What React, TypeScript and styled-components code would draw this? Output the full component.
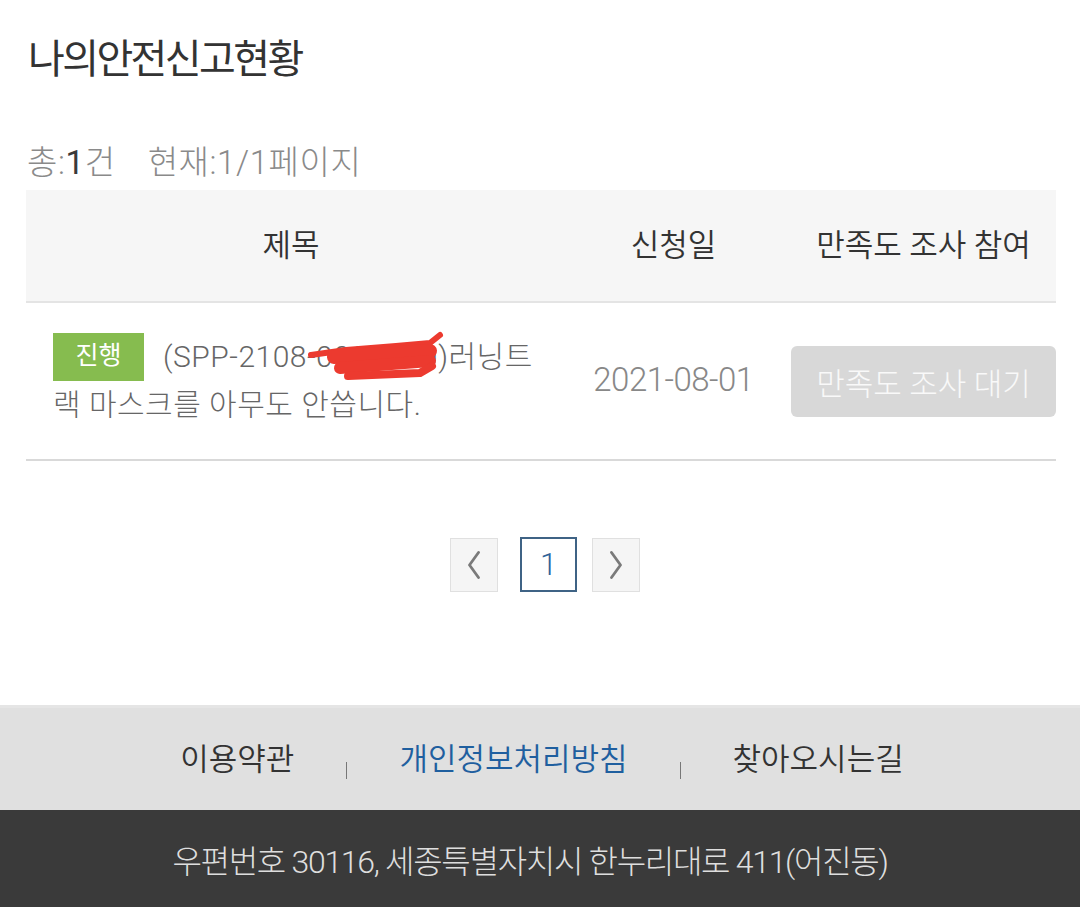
import React from "react";
import styled, { createGlobalStyle } from "styled-components";

const GlobalStyle = createGlobalStyle`
  html, body {
    margin: 0;
    padding: 0;
    background: #ffffff;
  }
  body {
    font-family: Roboto, "Noto Sans CJK KR", "Noto Sans", sans-serif;
    font-weight: 300;
    color: #333;
  }
  * { box-sizing: border-box; }
`;

const Page = styled.div`
  width: 1080px;
  display: flex;
  flex-direction: column;
`;

const Content = styled.main`
  padding: 0 24px 0 26px;
  display: flex;
  flex-direction: column;
`;

const Title = styled.h1`
  margin: 0;
  padding: 30px 0 0 2px;
  height: 90px;
  line-height: 60px;
  font-size: 40px;
  font-weight: 400;
  letter-spacing: -2.6px;
  color: #333;
`;

const Summary = styled.div`
  margin-top: 53px;
  margin-bottom: 7px;
  padding-left: 1px;
  height: 40px;
  line-height: 40px;
  font-size: 33px;
  letter-spacing: 0.6px;
  color: #8a8a8a;
  display: flex;
  gap: 32px;
`;

const Strong = styled.b`
  font-weight: 400;
  color: #3a3a3a;
`;

const Table = styled.table`
  width: 1030px;
  border-collapse: collapse;
  table-layout: fixed;
`;

const HeadRow = styled.tr`
  background: #f6f6f6;
  border-bottom: 2px solid #e4e4e4;
`;

const Th = styled.th<{ $w: number }>`
  width: ${(p) => p.$w}px;
  height: 112px;
  padding: 0 0 6px;
  font-size: 31px;
  font-weight: 350;
  letter-spacing: 0;
  color: #333;
  text-align: center;
  vertical-align: middle;
`;

const BodyRow = styled.tr`
  border-bottom: 2px solid #d9d9d9;
`;

const TitleCell = styled.td`
  height: 158px;
  padding: 0 18px 0 27px;
  vertical-align: middle;
  font-size: 30px;
  line-height: 48px;
  letter-spacing: 0.5px;
  color: #666;
  word-break: break-all;
`;

const Badge = styled.span`
  display: inline-block;
  width: 91px;
  height: 48px;
  margin-right: 19px;
  background: #86bc4f;
  color: #ffffff;
  font-size: 25px;
  font-weight: 400;
  letter-spacing: 0;
  line-height: 46px;
  text-align: center;
  vertical-align: top;
`;

const Redacted = styled.span`
  position: relative;
  letter-spacing: 0.8px;
`;

const Scribble = styled.svg`
  position: absolute;
  left: -10px;
  top: -8px;
  width: 145px;
  height: 50px;
  overflow: visible;
`;

const DateCell = styled.td`
  padding: 0 0 3px;
  text-align: center;
  vertical-align: middle;
  font-size: 33px;
  letter-spacing: -0.5px;
  color: #888;
`;

const ActionCell = styled.td`
  padding: 0;
  vertical-align: middle;
`;

const WaitButton = styled.button`
  width: 265px;
  height: 71px;
  border: none;
  border-radius: 6px;
  background: #d8d8d8;
  color: #f9f9f9;
  font-family: inherit;
  font-size: 31px;
  font-weight: 300;
  letter-spacing: 0;
  padding: 0;
  display: block;
`;

const Pager = styled.nav`
  margin-top: 76px;
  display: flex;
  justify-content: center;
  align-items: center;
  padding-left: 8px;
`;

const ArrowBox = styled.span<{ $side: "l" | "r" }>`
  width: 48px;
  height: 54px;
  border: 1px solid #e0e0e0;
  background: #f5f5f5;
  display: flex;
  align-items: center;
  justify-content: center;
  margin: ${(p) => (p.$side === "l" ? "0 22px 0 0" : "0 0 0 15px")};
`;

const CurrentPage = styled.span`
  width: 57px;
  height: 55px;
  border: 2px solid #3f6385;
  background: #fff;
  color: #2f6399;
  font-size: 31px;
  font-weight: 300;
  display: flex;
  align-items: center;
  justify-content: center;
`;

const LinksBar = styled.footer`
  margin-top: 113px;
  height: 105px;
  background: #e0e0e0;
  border-top: 3px solid #e5e5e5;
  display: flex;
  justify-content: center;
  align-items: center;
  gap: 52px;
  padding: 0 0 6px 4px;
`;

const FooterLink = styled.a<{ $active?: boolean }>`
  font-size: 31px;
  font-weight: 350;
  letter-spacing: 0;
  color: ${(p) => (p.$active ? "#1f5f9f" : "#333")};
  text-decoration: none;
`;

const Sep = styled.span`
  width: 1px;
  height: 17px;
  background: #777;
  margin-top: 28px;
`;

const AddressBar = styled.div`
  height: 97px;
  background: #3a3a3a;
  color: #dedede;
  display: flex;
  align-items: center;
  justify-content: center;
  font-size: 32px;
  font-weight: 300;
  letter-spacing: -1.3px;
  padding-right: 20px;
`;

const Chevron = ({ dir }: { dir: "l" | "r" }) => (
  <svg width="14" height="28" viewBox="0 0 14 28" fill="none">
    <path
      d={dir === "l" ? "M11.5 1.5 L2.5 14 L11.5 26.5" : "M2.5 1.5 L11.5 14 L2.5 26.5"}
      stroke="#7a7a7a"
      strokeWidth="2.8"
      strokeLinecap="round"
      strokeLinejoin="round"
    />
  </svg>
);

export default function App() {
  return (
    <Page>
      <GlobalStyle />
      <Content>
        <Title>나의안전신고현황</Title>
        <Summary>
          <span>
            총:<Strong>1</Strong>건
          </span>
          <span>현재:1/1페이지</span>
        </Summary>
        <Table>
          <thead>
            <HeadRow>
              <Th $w={530}>제목</Th>
              <Th $w={235}>신청일</Th>
              <Th $w={265}>만족도 조사 참여</Th>
            </HeadRow>
          </thead>
          <tbody>
            <BodyRow>
              <TitleCell>
                <Badge>진행</Badge>
                (SPP-2108-
                <Redacted>
                  0000000
                  <Scribble viewBox="0 0 145 50">
                    <g
                      stroke="#ec3a2f"
                      strokeLinecap="round"
                      strokeLinejoin="round"
                      fill="none"
                    >
                      <path d="M5 24 L40 19 L90 15 L124 12 L134 4" strokeWidth="6" />
                      <path d="M28 26 L124 20" strokeWidth="14" />
                      <path d="M34 37 L124 30" strokeWidth="12" />
                      <path d="M42 45 L114 42 L126 35" strokeWidth="8" />
                    </g>
                  </Scribble>
                </Redacted>
                )러닝트랙 마스크를 아무도 안씁니다.
              </TitleCell>
              <DateCell>2021-08-01</DateCell>
              <ActionCell>
                <WaitButton type="button">만족도 조사 대기</WaitButton>
              </ActionCell>
            </BodyRow>
          </tbody>
        </Table>
        <Pager>
          <ArrowBox $side="l">
            <Chevron dir="l" />
          </ArrowBox>
          <CurrentPage>1</CurrentPage>
          <ArrowBox $side="r">
            <Chevron dir="r" />
          </ArrowBox>
        </Pager>
      </Content>
      <LinksBar>
        <FooterLink href="#">이용약관</FooterLink>
        <Sep />
        <FooterLink href="#" $active>
          개인정보처리방침
        </FooterLink>
        <Sep />
        <FooterLink href="#">찾아오시는길</FooterLink>
      </LinksBar>
      <AddressBar>우편번호 30116, 세종특별자치시 한누리대로 411(어진동)</AddressBar>
    </Page>
  );
}
